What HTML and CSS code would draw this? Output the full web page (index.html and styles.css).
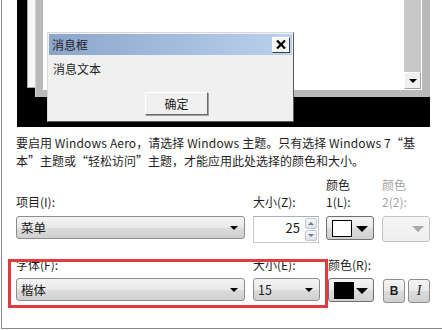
FILE: index.html
```html
<!DOCTYPE html>
<html lang="zh-CN">
<head>
    <meta charset="UTF-8">
    <title>窗口颜色和外观</title>
    <link rel="stylesheet" href="styles.css">
</head>
<body>
    <div class="page">
        <div class="preview">
            <div class="win inactive"></div>
            <div class="win active">
                <div class="client">
                    <div class="vscroll">
                        <span class="sb-btn"><i class="tri-sm"></i></span>
                    </div>
                </div>
            </div>
            <div class="msgbox">
                <div class="msg-title">
                    <span>消息框</span>
                    <span class="msg-close">
                        <svg width="10" height="9" viewBox="0 0 10 9"><path d="M1 0.5 L9 8.5 M9 0.5 L1 8.5" stroke="#000" stroke-width="2.2" fill="none"/></svg>
                    </span>
                </div>
                <div class="msg-text">消息文本</div>
                <div class="msg-ok">确定</div>
            </div>
        </div>

        <p class="note">要启用<span class="lat"> Windows Aero</span>，请选择<span class="lat"> Windows </span>主题。只有选择<span class="lat"> Windows 7</span>“基<br>本”主题或“轻松访问”主题，才能应用此处选择的颜色和大小。</p>

        <div class="row row-item">
            <div class="field w-item">
                <label>项目(I):</label>
                <div class="combo">菜单<i class="tri-sm"></i></div>
            </div>
            <div class="field w-size">
                <label>大小(Z):</label>
                <div class="spin">
                    <span class="spin-val">25</span>
                    <span class="spin-btns">
                        <span class="spin-up"><i></i></span>
                        <span class="spin-down"><i></i></span>
                    </span>
                </div>
            </div>
            <div class="field w-color">
                <label>颜色<br>1(L):</label>
                <div class="colorbtn"><span class="swatch white"></span><i class="tri"></i></div>
            </div>
            <div class="field w-color2 disabled">
                <label>颜色<br>2(2):</label>
                <div class="colorbtn off"><i class="tri"></i></div>
            </div>
        </div>

        <div class="row row-font">
            <div class="field w-item">
                <label>字体(F):</label>
                <div class="combo">楷体<i class="tri-sm"></i></div>
            </div>
            <div class="field w-fsize">
                <label>大小(E):</label>
                <div class="combo">15<i class="tri-sm"></i></div>
            </div>
            <div class="field w-fcolor">
                <label>颜色(R):</label>
                <div class="colorbtn"><span class="swatch black"></span><i class="tri"></i></div>
            </div>
            <div class="field w-style">
                <label>&nbsp;</label>
                <div class="stylebtns">
                    <span class="sbtn bold">B</span>
                    <span class="sbtn italic">I</span>
                </div>
            </div>
        </div>

        <div class="highlight"></div>
    </div>
</body>
</html>
```

FILE: styles.css
```css
* {
    margin: 0;
    padding: 0;
    box-sizing: border-box;
}

body {
    font-family: "Noto Sans CJK SC", sans-serif;
    font-size: 12px;
    color: #1e1e1e;
    background: #fff;
}

.page {
    position: relative;
    margin-left: 1px;
    height: 329px;
    border-left: 1px solid #8a8a8a;
    border-bottom: 1px solid #8a8a8a;
}

/* preview */

.preview {
    position: relative;
    margin-left: 15px;
    width: 413px;
    height: 127px;
    background: #000;
    overflow: hidden;
}

.win {
    position: absolute;
    top: -60px;
}

.inactive {
    left: 10px;
    width: 380px;
    height: 148px;
    background: #f6f7f9;
    border: 1px solid #a8a8a8;
}

.active {
    left: 18px;
    width: 395px;
    height: 157px;
    background: #bababa;
    border-left: 1px solid #d4d4d4;
}

.client {
    position: absolute;
    left: 7px;
    top: 0;
    width: 379px;
    height: 150px;
    background: #fff;
    border-right: 1px solid #fff;
    border-bottom: 1px solid #fff;
}

.vscroll {
    position: absolute;
    right: 0;
    top: 0;
    width: 17px;
    height: 149px;
    background: #c8c8c8;
}

.sb-btn {
    position: absolute;
    left: 0;
    bottom: 0;
    width: 17px;
    height: 17px;
    background: #f0f0f0;
    border: 1px solid #a0a0a0;
    border-top-color: #fff;
    border-left-color: #fff;
    display: flex;
    align-items: center;
    justify-content: center;
}

.sb-btn .tri-sm {
    position: static;
}

.msgbox {
    position: absolute;
    left: 30px;
    top: 32px;
    width: 247px;
    height: 90px;
    background: #f0f0f0;
    border: 1px solid #d8d8d8;
    border-right-color: #5a5a5a;
    border-bottom-color: #5a5a5a;
    padding: 1px;
}

.msg-title {
    height: 21px;
    padding: 0 2px 0 3px;
    background: linear-gradient(to right, #8ca5cb, #bad2ec);
    display: flex;
    align-items: center;
    justify-content: space-between;
    line-height: 21px;
}

.msg-close {
    width: 18px;
    height: 16px;
    background: #f4f4f4;
    border: 1px solid #fff;
    border-right-color: #404040;
    border-bottom-color: #404040;
    display: flex;
    align-items: center;
    justify-content: center;
}

.msg-text {
    padding: 6px 0 0 4px;
    line-height: 16px;
}

.msg-ok {
    margin: 15px 0 0 96px;
    width: 63px;
    height: 23px;
    background: #f0f0f0;
    border: 1px solid #fff;
    border-right-color: #6a6a6a;
    border-bottom-color: #6a6a6a;
    box-shadow: 1px 1px 0 #a0a0a0;
    text-align: center;
    line-height: 21px;
}

/* text */

.note {
    margin: 7px 0 0 14px;
    line-height: 18px;
    white-space: nowrap;
}

.lat {
    letter-spacing: 0.16px;
}

/* controls */

.row {
    display: flex;
    margin-left: 14px;
}

.row-item {
    margin-top: 6px;
}

.row-font {
    margin-top: 13px;
}

.field {
    display: flex;
    flex-direction: column;
}

.row-item label {
    height: 34px;
    display: flex;
    flex-direction: column;
    justify-content: flex-end;
    line-height: 17px;
    margin-bottom: 6px;
}

.row-font label {
    height: 17px;
    line-height: 17px;
    margin-bottom: 5px;
}

.disabled label {
    color: #a3a3a3;
}

.w-item { width: 229px; margin-right: 8px; }
.w-size { width: 66px; margin-right: 7px; }
.w-color { width: 48px; margin-right: 8px; }
.w-color2 { width: 48px; }
.w-fsize { width: 67px; margin-right: 8px; }
.w-fcolor { width: 46px; margin-right: 9px; }

.combo {
    position: relative;
    height: 23px;
    padding-left: 4px;
    line-height: 21px;
    font-size: 12.5px;
    border: 1px solid #8c8d8e;
    border-radius: 3px;
    background: linear-gradient(#f4f4f4, #e9e9e9 50%, #dcdcdc 51%, #d0d0d0);
}

.tri-sm {
    position: absolute;
    right: 6px;
    top: 9px;
    width: 0;
    height: 0;
    border-left: 4px solid transparent;
    border-right: 4px solid transparent;
    border-top: 4px solid #000;
}

.spin {
    position: relative;
    height: 27px;
    background: #fff;
    border: 1px solid #c6c8cc;
    border-top-color: #abadb3;
}

.spin-val {
    position: absolute;
    right: 18px;
    top: 0;
    line-height: 22px;
    font-size: 13px;
}

.spin-btns {
    position: absolute;
    right: 1px;
    top: 1px;
    width: 12px;
    display: flex;
    flex-direction: column;
    gap: 1px;
}

.spin-up,
.spin-down {
    height: 11px;
    border: 1px solid #c3c7ce;
    border-radius: 2px;
    background: linear-gradient(#f5f6f8, #dde1e7);
    display: flex;
    align-items: center;
    justify-content: center;
}

.spin-up i,
.spin-down i {
    width: 0;
    height: 0;
    border-left: 3px solid transparent;
    border-right: 3px solid transparent;
}

.spin-up i {
    border-bottom: 3px solid #6a7c98;
}

.spin-down i {
    border-top: 3px solid #6a7c98;
}

.colorbtn {
    position: relative;
    height: 24px;
    border: 1px solid #707070;
    border-radius: 3px;
    background: linear-gradient(#f4f4f4, #e9e9e9 50%, #dcdcdc 51%, #d0d0d0);
}

.colorbtn.off {
    height: 26px;
    border-color: #c4c4c4;
    background: linear-gradient(#f6f6f6, #eeeeee);
}

.swatch {
    position: absolute;
    left: 5px;
    top: 3px;
    width: 20px;
    height: 17px;
    border: 1px solid #000;
}

.swatch.white {
    background: #fff;
}

.swatch.black {
    background: #000;
}

.tri {
    position: absolute;
    right: 5px;
    top: 9px;
    width: 0;
    height: 0;
    border-left: 6px solid transparent;
    border-right: 6px solid transparent;
    border-top: 6px solid #000;
}

.off .tri {
    border-top-color: #a8a8a8;
}

.stylebtns {
    display: flex;
    gap: 3px;
    margin-top: 1px;
}

.sbtn {
    width: 22px;
    height: 24px;
    border: 1px solid #8c8d8e;
    border-radius: 3px;
    background: linear-gradient(#f4f4f4, #e9e9e9 50%, #dcdcdc 51%, #d0d0d0);
    text-align: center;
    line-height: 22px;
}

.bold {
    font-family: "Liberation Sans", sans-serif;
    font-weight: bold;
    font-size: 12px;
}

.italic {
    font-family: "Liberation Serif", serif;
    font-style: italic;
    font-size: 14px;
}

/* red annotation frame */

.highlight {
    position: absolute;
    left: 6px;
    top: 259px;
    width: 320px;
    height: 49px;
    border: 3px solid #e23b3f;
}
```
